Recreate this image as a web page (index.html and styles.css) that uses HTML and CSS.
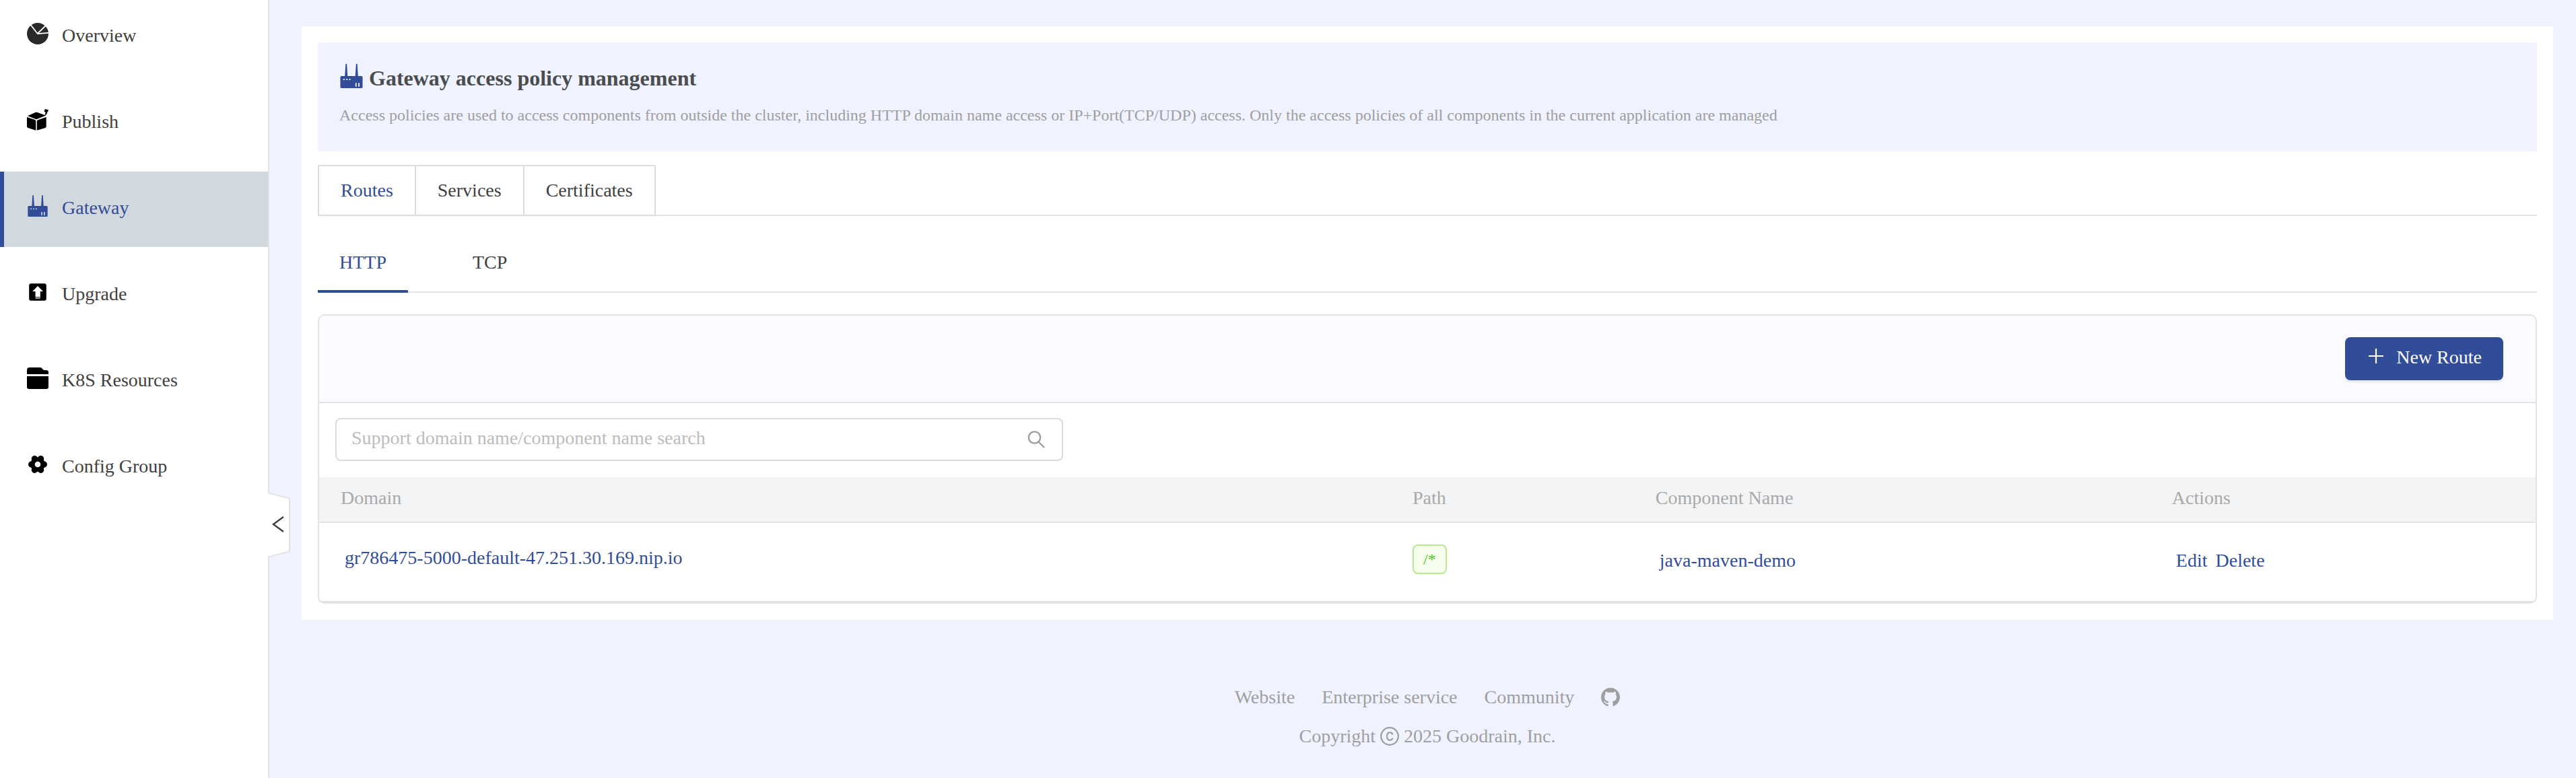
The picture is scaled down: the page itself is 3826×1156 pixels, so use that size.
FILE: index.html
```html
<!DOCTYPE html>
<html lang="en">
<head>
<meta charset="utf-8">
<meta name="viewport" content="width=device-width, initial-scale=1">
<title>Gateway access policy management</title>
<link rel="stylesheet" href="styles.css">
</head>
<body>
<svg width="0" height="0" class="sprite" aria-hidden="true">
  <symbol id="icon-gateway" viewBox="0 0 32 32">
    <path fill-rule="evenodd" d="M8.300 0h1.600l1 16h10.200l1-16h1.600l1 16h4.500q1.500 0 1.500 1.500v13q0 1.500-1.500 1.500h-26.400q-1.500 0-1.500-1.500v-13q0-1.500 1.500-1.500h4.500zM5.200 19.500v1.800h1.700v-1.800zM9.100 19.500v1.800h1.700v-1.800zM13 19.500v1.800h1.700v-1.800zM21.200 25v5h1.600v-5zM25 25v5h1.700v-5z"/>
  </symbol>
</svg>
<aside class="sidebar">
  <nav class="menu">
    <a class="menu-item" href="#overview">
      <svg class="icon" viewBox="0 0 32 32"><circle cx="16" cy="16" r="16" fill="#28292b"/><path d="M5 2.300 15.700 16 28 4M15.700 16.200 32.500 14.800" fill="none" stroke="#fff" stroke-width="1.800"/></svg>
      Overview</a>
    <a class="menu-item" href="#publish">
      <svg class="icon" viewBox="0 0 32 32"><path d="M1 10.200 12.500 5q1.500-.6 3 0L25 8.500l2.700 1.300L15.500 14.800q-1.500.5-3 0zM0 12l12 4q1.300.6 1.300 2v13.700L1.500 28Q0 27.300 0 26zM28.700 12l-12.500 4.200q-1.400.6-1.400 2v13.500L27.300 28q1.400-.7 1.400-2zM26.700 0l5.300 1.300-1 3.200-.8-.2q.3 3-2.700 5.200H26q2-2.500 1.500-5l-2-.5z"/></svg>
      Publish</a>
    <a class="menu-item active" href="#gateway" aria-current="page">
      <svg class="icon"><use href="#icon-gateway"/></svg>
      Gateway</a>
    <a class="menu-item" href="#upgrade">
      <svg class="icon" viewBox="0 0 32 32"><rect x="3.200" y="3.200" width="25.600" height="25.600" rx="3"/><path fill="#fff" d="M16 7l8 8h-4.200v8.200h-7.200V15H8.200zM12.600 24.300h7.200v1.200h-7.200z"/></svg>
      Upgrade</a>
    <a class="menu-item" href="#resources">
      <svg class="icon" viewBox="0 0 32 32"><path d="M0 10V4q0-4 4-4h15.500q2.500 0 3.500 2t3 2h2.500Q32 4 32 7v3zM0 13h32v16q0 3-3 3H3q-3 0-3-3z"/></svg>
      K8S Resources</a>
    <a class="menu-item" href="#config">
      <svg class="icon" viewBox="0 0 32 32"><circle cx="16" cy="16" r="10.800"/><circle cx="25.300" cy="16" r="4.700"/><circle cx="6.700" cy="16" r="4.700"/><circle cx="20.600" cy="7.700" r="4.700"/><circle cx="11.400" cy="7.700" r="4.700"/><circle cx="20.600" cy="24.300" r="4.700"/><circle cx="11.400" cy="24.300" r="4.700"/><circle cx="16" cy="16" r="4.300" fill="#fff"/></svg>
      Config Group</a>
  </nav>
  <button class="collapse" type="button" aria-label="Collapse menu">
    <svg width="34" height="96" viewBox="0 0 34 96"><path d="M0 0 32 8.500V87.500L0 96z" fill="#fff"/><path d="M0 .5 32 8.500V87.500L0 95.500" fill="none" stroke="#dedede" stroke-width="1.600"/><path d="M23 36 8 47 23 58" fill="none" stroke="#404040" stroke-width="2.400"/></svg>
  </button>
</aside>

<div class="page">
  <main class="card">
    <header class="intro">
      <h1 class="intro-title"><svg class="icon icon-large"><use href="#icon-gateway"/></svg>Gateway access policy management</h1>
      <p class="intro-text">Access policies are used to access components from outside the cluster, including HTTP domain name access or IP+Port(TCP/UDP) access. Only the access policies of all components in the current application are managed</p>
    </header>

    <div class="tabs" role="tablist">
      <button class="tab active" type="button" role="tab" aria-selected="true">Routes</button>
      <button class="tab" type="button" role="tab">Services</button>
      <button class="tab" type="button" role="tab">Certificates</button>
    </div>

    <div class="subtabs" role="tablist">
      <button class="subtab active" type="button" role="tab" aria-selected="true">HTTP</button>
      <button class="subtab" type="button" role="tab">TCP</button>
    </div>

    <section class="panel">
      <div class="toolbar">
        <button class="primary" type="button">
          <svg width="28" height="28" viewBox="0 0 28 28"><path d="M14 3v22M3 14h22" stroke="#fff" stroke-width="2.200"/></svg>
          New Route</button>
      </div>
      <div class="search-row">
        <div class="search">
          <input type="text" aria-label="Search routes" placeholder="Support domain name/component name search">
          <svg width="28" height="28" viewBox="0 0 28 28"><g fill="none" stroke="#9b9b9b" stroke-width="2.300"><circle cx="11.500" cy="11" r="8.700"/><path d="M17.500 17.500 26 26"/></g></svg>
        </div>
      </div>
      <table class="routes">
        <colgroup><col class="col-domain"><col class="col-path"><col class="col-component"><col></colgroup>
        <thead>
          <tr><th scope="col">Domain</th><th scope="col">Path</th><th scope="col">Component Name</th><th scope="col">Actions</th></tr>
        </thead>
        <tbody>
          <tr>
            <td><a class="link domain" href="#domain">gr786475-5000-default-47.251.30.169.nip.io</a></td>
            <td><span class="tag">/*</span></td>
            <td><a class="link" href="#component">java-maven-demo</a></td>
            <td><div class="actions"><a class="link" href="#edit">Edit</a><a class="link" href="#delete">Delete</a></div></td>
          </tr>
        </tbody>
      </table>
    </section>
  </main>

  <footer class="footer">
    <div class="footer-links">
      <a href="#website">Website</a>
      <a href="#enterprise">Enterprise service</a>
      <a href="#community">Community</a>
      <a href="#github" aria-label="GitHub"><svg width="28" height="28" viewBox="0 0 16 16" fill="currentColor"><path d="M8 0C3.580 0 0 3.580 0 8c0 3.540 2.290 6.530 5.470 7.590.4.070.55-.17.55-.38 0-.19-.010-.82-.010-1.490-2.010.37-2.530-.49-2.690-.94-.09-.23-.48-.94-.82-1.130-.28-.15-.68-.52-.010-.53.63-.010 1.080.58 1.230.82.72 1.210 1.870.87 2.330.66.070-.52.28-.87.51-1.070-1.780-.2-3.640-.89-3.640-3.950 0-.87.31-1.590.82-2.150-.08-.2-.36-1.020.08-2.120 0 0 .67-.21 2.200.82.64-.18 1.320-.27 2-.27s1.360.09 2 .27c1.530-1.040 2.200-.82 2.200-.82.44 1.100.16 1.920.08 2.120.51.56.82 1.270.82 2.150 0 3.070-1.870 3.750-3.650 3.950.29.25.54.73.54 1.480 0 1.070-.010 1.930-.010 2.200 0 .21.15.46.55.38A8.010 8.010 0 0 0 16 8c0-4.420-3.580-8-8-8z"/></svg></a>
    </div>
    <div class="copyright">Copyright
      <svg width="28" height="28" viewBox="0 0 28 28"><g fill="none" stroke="currentColor" stroke-width="2.300"><circle cx="14" cy="14" r="12.800"/><path d="M18.400 11.500C18 9.300 16.500 8.300 14.300 8.300 11.500 8.300 10 10.300 10 14s1.500 5.800 4.300 5.800c2.200 0 3.800-1.100 4.100-3.100"/></g></svg>
      2025 Goodrain, Inc.</div>
  </footer>
</div>
</body>
</html>
```

FILE: styles.css
```css
* { box-sizing: border-box; }

:root {
  --primary: #324d97;
  --text: #404040;
  --muted: #9f9f9f;
  --line: #e3e3e3;
  --page: #f0f2ff;
}

body {
  display: flex;
  min-height: 100vh;
  margin: 0;
  background: var(--page);
  color: var(--text);
  font: 28px/42px "Liberation Serif", "Times New Roman", serif;
}

a { color: inherit; text-decoration: none; }
button, input { font: inherit; color: inherit; }
svg { display: block; flex: none; }
.sprite { position: absolute; }

/* Sidebar */
.sidebar {
  position: relative;
  flex: none;
  width: 400px;
  background: #fff;
  border-right: 2px solid var(--line);
}
.menu {
  display: flex;
  flex-direction: column;
  gap: 16px;
  margin-top: -1px;
}
.menu-item {
  display: flex;
  align-items: center;
  gap: 20px;
  height: 112px;
  padding: 0 0 4px 34px;
  border-left: 6px solid transparent;
}
.menu-item.active {
  background: #d1d8de;
  border-left-color: var(--primary);
  color: var(--primary);
}
.icon {
  width: 32px;
  height: 32px;
  margin-bottom: 6px;
  fill: #000;
}
.active .icon, .icon-large { fill: var(--primary); }
.icon-large { width: 36px; height: 36px; }
.collapse {
  position: absolute;
  top: 732px;
  left: 398px;
  padding: 0;
  border: 0;
  background: none;
}

/* Page column */
.page {
  flex: 1;
  min-width: 0;
  padding: 39px 34px 41px 48px;
}
.card { padding: 24px; background: #fff; }

.intro { padding: 30px 32px 36px; background: var(--page); }
.intro-title {
  display: flex;
  align-items: center;
  gap: 8px;
  margin: 0 0 14px;
  color: #4a4d50;
  font-size: 32px;
  line-height: 46px;
}
.intro-text { margin: 0; color: var(--muted); font-size: 24px; line-height: 36px; }

.tabs {
  display: flex;
  margin-top: 20px;
  box-shadow: inset 0 -2px var(--line);
}
.tab {
  padding: 0 32px;
  border: 2px solid #dcdcdc;
  border-left: 0;
  background: none;
  line-height: 72px;
}
.tab:first-child { border-left: 2px solid #dcdcdc; }

.subtabs {
  display: flex;
  gap: 64px;
  margin-top: 32px;
  box-shadow: inset 0 -2px var(--line);
}
.subtab {
  padding: 16px 32px 20px;
  border: 0;
  border-bottom: 4px solid transparent;
  background: none;
}
.subtab.active { border-bottom-color: var(--primary); }
.tab.active, .subtab.active { color: var(--primary); }

/* Routes panel */
.panel {
  margin-top: 32px;
  border: 2px solid var(--line);
  border-radius: 10px;
  overflow: hidden;
}
.toolbar {
  display: flex;
  justify-content: flex-end;
  padding: 32px 48px 32px 24px;
  border-bottom: 2px solid var(--line);
  background: #fafaff;
}
.primary {
  display: flex;
  align-items: center;
  gap: 16px;
  padding: 10px 32px 14px;
  border: 0;
  border-radius: 8px;
  background: var(--primary);
  box-shadow: 0 4px #eceef4;
  color: #fff;
  line-height: 40px;
}
.primary svg { margin-bottom: 4px; }

.search-row { padding: 22px 24px 24px; }
.search {
  display: flex;
  align-items: center;
  width: calc(100% / 3);
  height: 64px;
  padding: 0 24px 0 22px;
  border: 2px solid #dcdcdc;
  border-radius: 8px;
}
.search input {
  flex: 1;
  min-width: 0;
  height: 60px;
  padding: 0 0 4px;
  border: 0;
  outline: 0;
  background: none;
}
.search input::placeholder { color: #bcbcbc; opacity: 1; }

.routes {
  width: 100%;
  table-layout: fixed;
  border-spacing: 0;
  text-align: left;
}
.col-domain { width: 48.36%; }
.col-path { width: 10.96%; }
.col-component { width: 23.3%; }
.routes th {
  padding: 10px 32px 14px;
  border-bottom: 2px solid var(--line);
  background: #f3f4f6;
  color: #a9a9a9;
  font-weight: normal;
}
.routes td {
  padding: 32px 32px 36px;
  border-bottom: 2px solid var(--line);
  vertical-align: top;
}
.link {
  display: block;
  padding: 0 6px;
  color: var(--primary);
  line-height: 48px;
}
.link.domain { line-height: 40px; }
.actions { display: flex; }
.tag {
  display: block;
  width: fit-content;
  padding: 0 14px;
  border: 2px solid #b7eb8f;
  border-radius: 8px;
  background: #f6ffed;
  color: #52c41a;
  font-size: 24px;
  line-height: 40px;
}

/* Footer */
.footer {
  display: flex;
  flex-direction: column;
  align-items: center;
  gap: 16px;
  margin-top: 94px;
  color: #9f9f9f;
}
.footer-links, .copyright { display: flex; align-items: center; }
.footer-links { gap: 40px; }
.copyright { gap: 7px; }
```
